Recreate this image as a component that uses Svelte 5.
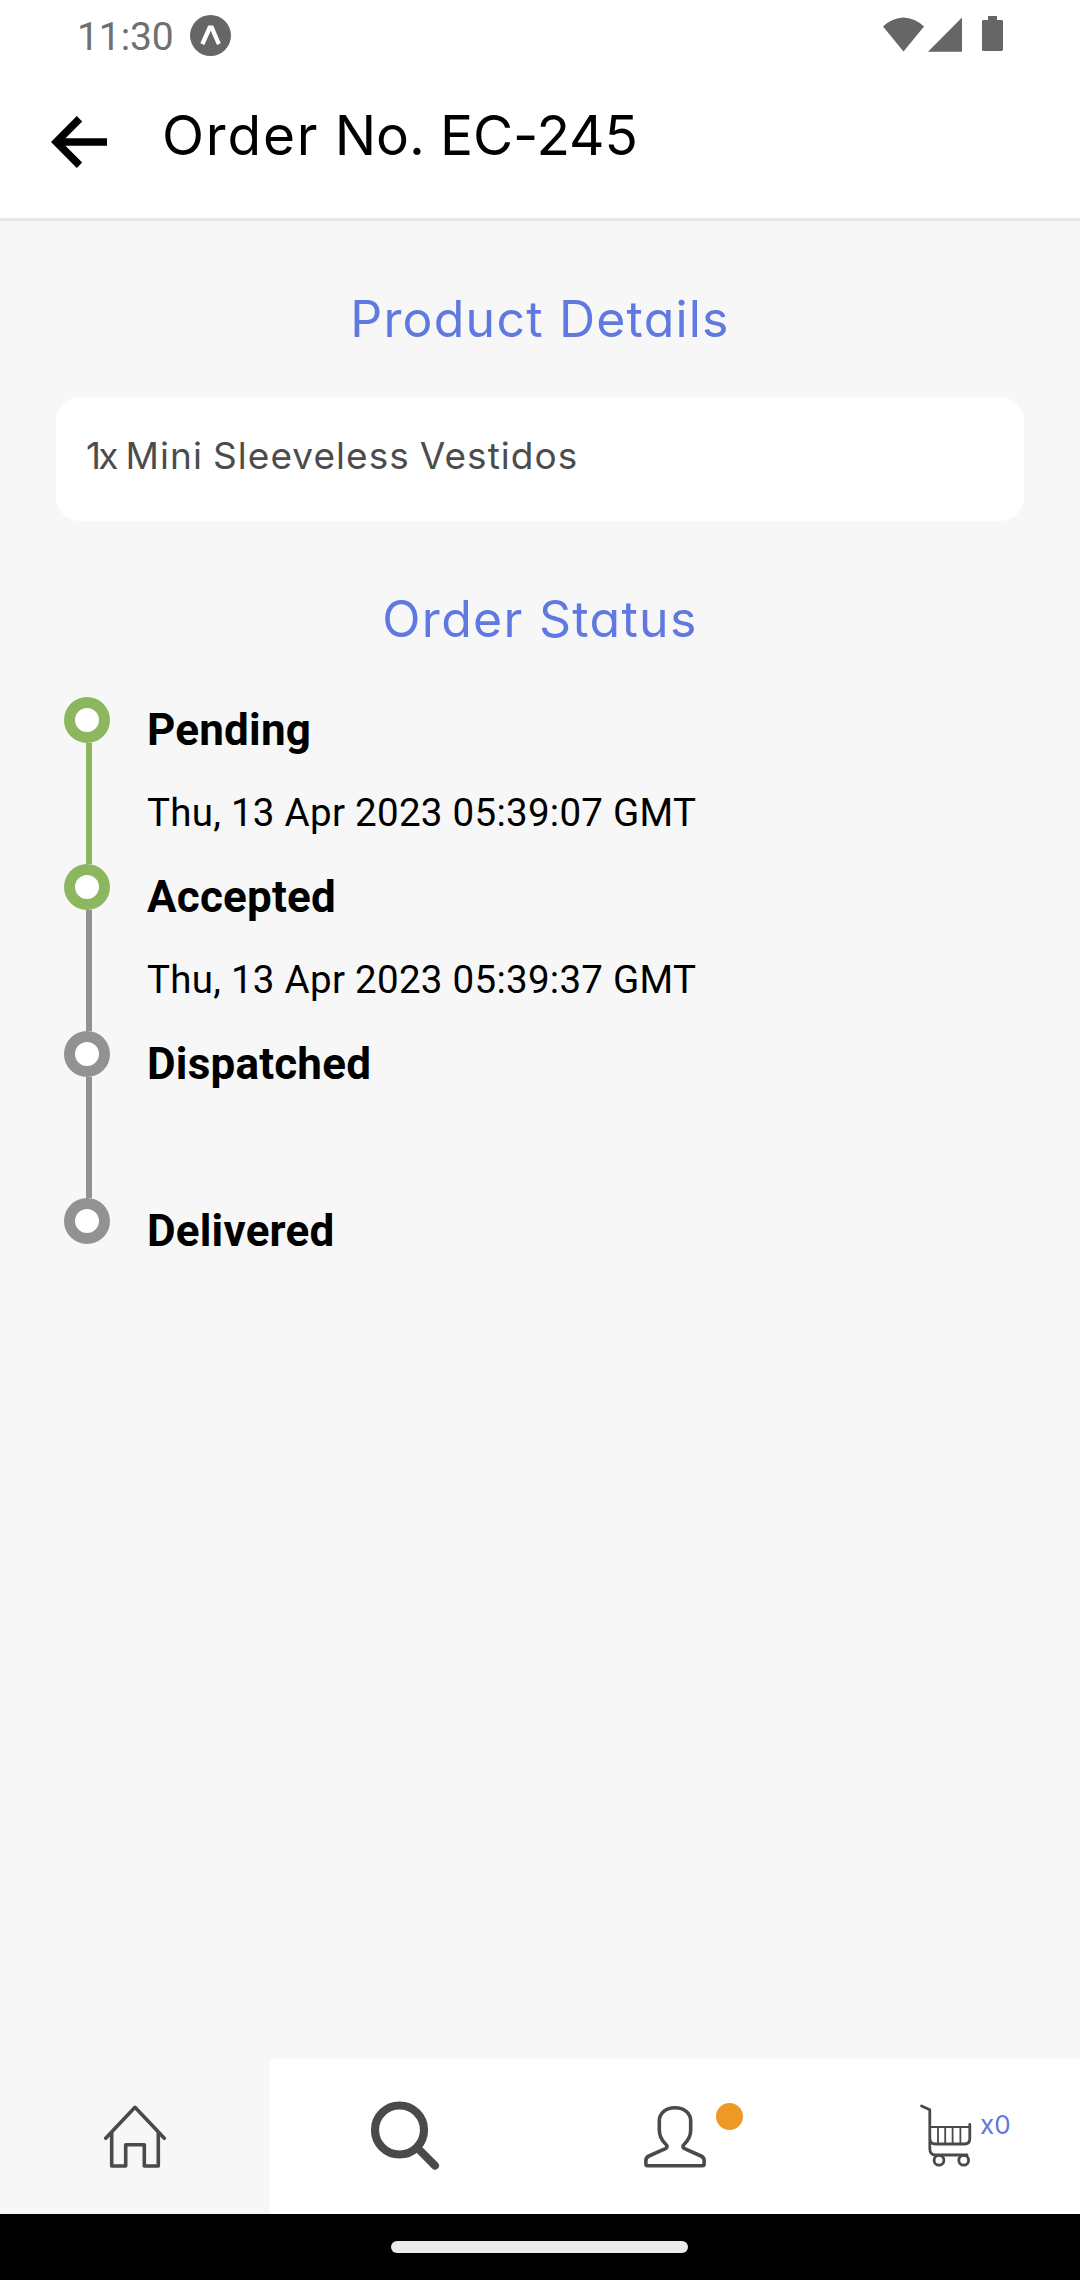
<script>
  const steps = [
    { label: 'Pending', date: 'Thu, 13 Apr 2023 05:39:07 GMT', done: true, lineDone: true },
    { label: 'Accepted', date: 'Thu, 13 Apr 2023 05:39:37 GMT', done: true, lineDone: false },
    { label: 'Dispatched', date: '', done: false, lineDone: false },
    { label: 'Delivered', date: '', done: false, lineDone: false }
  ];
</script>

<div class="screen">
  <div class="status-bar">
    <span class="time">11:30</span>
    <svg class="app-badge" viewBox="0 0 41 41">
      <circle cx="20.5" cy="20.5" r="20.5" fill="#666" />
      <path d="M10.4 28.2 L18.2 10.6 H23.2 L30.8 28.2 L27 30 L20.7 15.8 L14.4 30 Z" fill="#fff" />
    </svg>
    <div class="system">
      <svg class="wifi" viewBox="0 0 41 35"><path d="M0 9.6 Q9 .6 20.5 .4 Q32 .6 41 9.6 L20.5 34.6 Z" /></svg>
      <svg class="signal" viewBox="0 0 34 35"><path d="M34 .6 V34.7 H0 Z" /></svg>
      <svg class="battery" viewBox="0 0 21 35"><path d="M6 0 H15 V4 H20 L21 5 V34 L20 35 H1 L0 34 V5 L1 4 H6 Z" /></svg>
    </div>
  </div>

  <header>
    <svg class="back" viewBox="0 0 56 52">
      <path d="M28.5 2.7 L5.3 26 L28.5 49.3 M5 26 H56" fill="none" stroke="#000" stroke-width="7.6" />
    </svg>
    <h1><span class="lead">Order</span> No. EC-245</h1>
  </header>

  <main>
    <h2 class="details">Product Details</h2>
    <div class="card"><span class="qty">1x</span> Mini Sleeveless Vestidos</div>
    <h2 class="status">Order Status</h2>
    <ol>
      {#each steps as step, i}
        <li>
          <div class="rail">
            <span class="dot" class:done={step.done}></span>
            {#if i < steps.length - 1}
              <span class="line" class:done={step.lineDone}></span>
            {/if}
          </div>
          <div class="info">
            <strong>{step.label}</strong>
            <span class="date">{step.date}</span>
          </div>
        </li>
      {/each}
    </ol>
  </main>

  <nav>
    <div class="tab active">
      <svg viewBox="0 0 70 71">
        <path d="M5.7 37.3 L35 6.3 L64.3 37.3 M11.7 32 V65 H25.7 V43.7 H44.3 V65 H58.3 V32" />
      </svg>
    </div>
    <div class="tab">
      <svg viewBox="0 0 70 71">
        <circle cx="29.5" cy="29" r="24.5" stroke-width="8.2" />
        <path d="M48 47.5 L65 64.6" stroke-width="8" />
      </svg>
    </div>
    <div class="tab">
      <svg viewBox="0 0 70 71">
        <path d="M35 6.7 C26 6.7 19.3 12 19.3 20 V29 C19.3 36 22.3 40 26 43.5 C27.6 45 27.3 46.8 25.4 47.7 L9 55 C6.8 56 5.9 57.2 5.9 59.3 V63 Q5.9 64.8 7.7 64.8 H62.3 Q64.1 64.8 64.1 63 V59.3 C64.1 57.2 63.2 56 61 55 L44.6 47.7 C42.7 46.8 42.4 45 44 43.5 C47.7 40 50.7 36 50.7 29 V20 C50.7 12 44 6.7 35 6.7 Z" />
      </svg>
      <span class="notice"></span>
    </div>
    <div class="tab">
      <svg viewBox="0 0 70 71">
        <path d="M11.5 5 L19.8 8.8 V47.5 Q19.8 54 25.5 54 H57 M59.8 23.3 V37.5 Q59.8 43 54.5 43 H25.5 Q20 43 20 38" stroke-width="2.8" />
        <path d="M20 26 H59.5 M28 26 V42 M35.2 26 V42 M42.6 26 V42 M50.4 26 V42" stroke-width="1.8" />
        <circle cx="29" cy="59.3" r="4.9" stroke-width="2.8" />
        <circle cx="53.7" cy="59.3" r="4.9" stroke-width="2.8" />
      </svg>
      <span class="count">x0</span>
    </div>
  </nav>

  <footer><span class="pill"></span></footer>
</div>

<style>
  :global(body) { margin: 0; }
  .screen {
    width: 1080px;
    height: 2280px;
    display: flex;
    flex-direction: column;
    background: #f7f7f7;
    font-family: Roboto, sans-serif;
    color: #000;
    overflow: hidden;
  }
  svg { display: block; flex: none; }

  .status-bar {
    height: 72px;
    box-sizing: border-box;
    padding: 0 77px 0 77px;
    display: flex;
    align-items: flex-start;
    background: #fff;
  }
  .time {
    width: 113px;
    padding-top: 13px;
    font-size: 39px;
    line-height: 49px;
    letter-spacing: -0.1px;
    color: #707070;
    white-space: nowrap;
  }
  .app-badge { width: 41px; height: 41px; margin-top: 15px; }
  .system { display: flex; margin-left: auto; padding-top: 16px; fill: #666; }
  .wifi { width: 41px; height: 35px; margin: 1px 4px 0 0; }
  .signal { width: 34px; height: 35px; margin: 1px 20px 0 0; }
  .battery { width: 21px; height: 35px; }

  header {
    height: 149px;
    box-sizing: border-box;
    padding-left: 51px;
    display: flex;
    align-items: flex-start;
    background: #fff;
    border-bottom: 3px solid #e6e6e6;
  }
  .back { width: 56px; height: 52px; margin-top: 44px; }
  h1, h2, .card, .count {
    font-family: Inter, sans-serif;
    font-weight: 400;
    font-feature-settings: 'cv11';
    white-space: nowrap;
  }
  h1 {
    margin: 31px 0 0 55px;
    font-size: 55px;
    line-height: 65px;
    letter-spacing: -0.1px;
  }
  .lead { letter-spacing: 1.8px; }

  main { flex: 1; padding: 0 56px; }
  h2 {
    margin: 0;
    font-size: 50px;
    line-height: 60px;
    color: #6079e0;
    text-align: center;
  }
  .details { padding-top: 68px; letter-spacing: 1.2px; }
  .card {
    height: 124px;
    margin-top: 48px;
    box-sizing: border-box;
    padding: 36px 0 0 30px;
    border-radius: 24px;
    background: #fff;
    color: #4c4c4c;
    font-size: 37px;
    line-height: 46px;
    letter-spacing: 1.05px;
    word-spacing: -1.5px;
  }
  .qty { letter-spacing: -2.8px; }
  .status { padding-top: 68px; letter-spacing: 1.3px; }
  ol { list-style: none; margin: 48px 0 0; padding: 0 0 0 8px; }
  li { display: flex; height: 167px; }
  .rail { width: 46px; display: flex; flex-direction: column; align-items: center; }
  .dot {
    width: 46px;
    height: 46px;
    box-sizing: border-box;
    border: 11.5px solid #929292;
    border-radius: 50%;
    background: #fff;
    flex: none;
  }
  .dot.done { border-color: #8cb75f; }
  .line { width: 6px; flex: 1; margin-left: 4px; background: #929292; }
  .line.done { background: #8cb75f; }
  .info { display: flex; flex-direction: column; padding: 7px 0 0 37px; }
  strong { font-size: 44px; line-height: 52px; font-weight: 700; letter-spacing: 0.2px; }
  .date { margin-top: 34px; font-size: 38.5px; line-height: 46px; letter-spacing: 0.28px; }

  nav { height: 155px; display: flex; background: #fff; }
  .tab {
    position: relative;
    flex: 1;
    display: flex;
    align-items: center;
    justify-content: center;
  }
  .tab.active { background: #f7f7f7; }
  .tab svg {
    width: 70px;
    height: 71px;
    fill: none;
    stroke: #4a4a4a;
    stroke-width: 3.6;
    stroke-linecap: round;
    stroke-linejoin: round;
  }
  .notice {
    position: absolute;
    left: 176px;
    top: 44px;
    width: 27px;
    height: 27px;
    border-radius: 50%;
    background: #ee9926;
  }
  .count {
    position: absolute;
    left: 170px;
    top: 51px;
    font-size: 26px;
    line-height: 30px;
    color: #6079e0;
  }

  footer {
    height: 66px;
    display: flex;
    align-items: center;
    justify-content: center;
    background: #000;
  }
  .pill { width: 297px; height: 12px; margin-right: 1px; border-radius: 6px; background: #ebebeb; }
</style>
